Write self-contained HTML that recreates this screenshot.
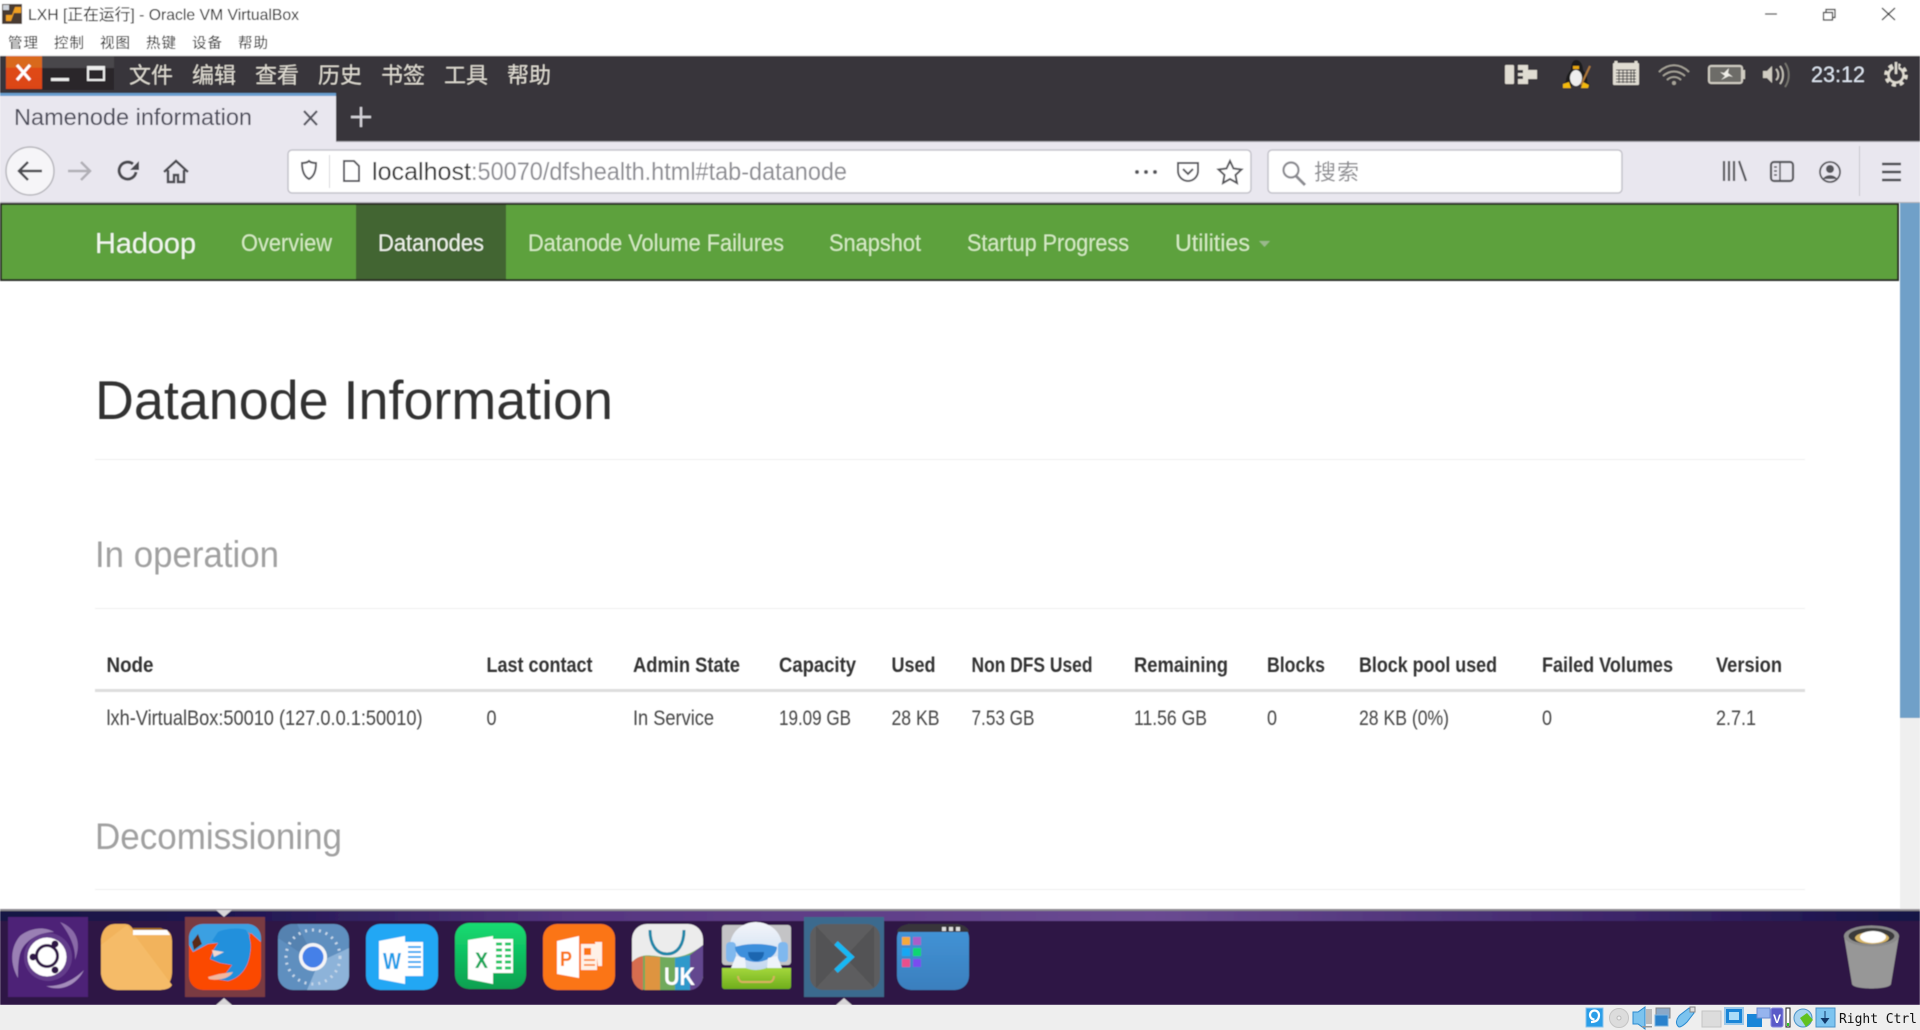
<!DOCTYPE html>
<html lang="zh">
<head>
<meta charset="utf-8">
<title>LXH [正在运行] - Oracle VM VirtualBox</title>
<style>
html,body{margin:0;padding:0;width:1920px;height:1030px;overflow:hidden;background:#fff}
svg{display:block}
text{font-family:"Liberation Sans","Noto Sans CJK SC",sans-serif}
.cjk{font-family:"Noto Sans CJK SC","WenQuanYi Zen Hei",sans-serif}
.th{font-size:21px;font-weight:700;fill:#333}
.td{font-size:21px;fill:#444}
.nav{font-size:24px;fill:#d6ebc4}
.m{font-size:22px;fill:#dfdbd2}
</style>
</head>
<body>
<svg width="1920" height="1030" viewBox="0 0 1920 1030" xmlns="http://www.w3.org/2000/svg">
<defs>
<filter id="b" filterUnits="userSpaceOnUse" x="0" y="0" width="1920" height="1030"><feGaussianBlur stdDeviation=".5"/></filter>
<linearGradient id="strip" x1="0" x2="1" y1="0" y2="0"><stop offset="0" stop-color="#171244"/><stop offset=".12" stop-color="#1f1650"/><stop offset=".3" stop-color="#563580"/><stop offset=".6" stop-color="#6a4a92"/><stop offset=".85" stop-color="#3c2568"/><stop offset="1" stop-color="#141245"/></linearGradient>
<linearGradient id="grnx" x1="0" x2="0" y1="0" y2="1"><stop offset="0" stop-color="#14dc72"/><stop offset="1" stop-color="#0da050"/></linearGradient>
<linearGradient id="filesg" x1="0" x2="0" y1="0" y2="1"><stop offset="0" stop-color="#4395d8"/><stop offset="1" stop-color="#3a7fbe"/></linearGradient>
<linearGradient id="orx" x1="0" x2="0" y1="0" y2="1"><stop offset="0" stop-color="#d9691a"/><stop offset=".35" stop-color="#d9691a"/><stop offset=".36" stop-color="#e04a14"/><stop offset="1" stop-color="#dc4514"/></linearGradient>
<linearGradient id="sg" x1="0" x2="0" y1="0" y2="1"><stop offset="0" stop-color="#a4d63c"/><stop offset="1" stop-color="#6fae1c"/></linearGradient>
<linearGradient id="hd" x1="0" x2="0" y1="0" y2="1"><stop offset="0" stop-color="#f4f6fa"/><stop offset="1" stop-color="#c4d8f0"/></linearGradient>
</defs>

<g filter="url(#b)">
<!-- Window chrome -->
<rect width="1920" height="56" fill="#fff"/>
<rect x="2" y="4" width="20" height="20" fill="#4a3a30"/>
<path d="M6 21h5l3-8h7V7h-6l-3 8H6z" fill="#f0a020"/>
<rect x="3" y="5" width="6" height="5" fill="#cfd4dc"/>
<text x="28" y="20" font-size="16" fill="#111" textLength="271" lengthAdjust="spacingAndGlyphs">LXH [正在运行] - Oracle VM VirtualBox</text>
<g fill="#111">
<text class="cjk" font-size="14.5" x="8" y="48" textLength="30">管理</text>
<text class="cjk" font-size="14.5" x="54" y="48" textLength="30">控制</text>
<text class="cjk" font-size="14.5" x="100" y="48" textLength="30">视图</text>
<text class="cjk" font-size="14.5" x="146" y="48" textLength="30">热键</text>
<text class="cjk" font-size="14.5" x="192" y="48" textLength="30">设备</text>
<text class="cjk" font-size="14.5" x="238" y="48" textLength="30">帮助</text>
</g>
<path d="M1765 14h12" stroke="#222" stroke-width="1.2"/>
<path d="M1823.5 12.5h9v7.500h-9zM1826 12.500v-3h9v8h-2.500" fill="none" stroke="#222" stroke-width="1.2"/>
<path d="M1882 8l13 12M1895 8l-13 12" stroke="#222" stroke-width="1.2"/>

<!-- Ubuntu top panel / tab strip -->
<rect y="55" width="1920" height="1" fill="#eee"/>
<rect y="56" width="1920" height="86" fill="#37363b"/>
<rect x="6" y="56" width="108" height="34" fill="#29282c"/>
<rect x="42" y="56" width="72" height="12" fill="#48474c"/>
<rect x="6" y="56" width="36" height="33" fill="url(#orx)"/>
<path d="M17 65l13 15M30 65l-13 15" stroke="#fff" stroke-width="3"/>
<rect x="51" y="78" width="18" height="3" fill="#eee"/>
<rect x="88" y="67" width="16" height="13" fill="none" stroke="#eee" stroke-width="2"/><rect x="88" y="66" width="16" height="4" fill="#eee"/>
<g>
<text class="cjk m" x="129" y="83" textLength="44">文件</text>
<text class="cjk m" x="192" y="83" textLength="44">编辑</text>
<text class="cjk m" x="255" y="83" textLength="44">查看</text>
<text class="cjk m" x="318" y="83" textLength="44">历史</text>
<text class="cjk m" x="381" y="83" textLength="44">书签</text>
<text class="cjk m" x="444" y="83" textLength="44">工具</text>
<text class="cjk m" x="507" y="83" textLength="44">帮助</text>
</g>

<!-- Tray -->
<rect x="1505" y="65" width="9" height="19" rx="1" fill="#e0dcd2"/>
<path d="M1518 65h10v5h9v9h-9v5h-10v-5h5v-3h-5v-3h5v-3h-5z" fill="#e0dcd2"/>
<path d="M1576 60c5 0 7 6 7 10 3 3 5 8 4 12l3 3c0 2-5 3-8 2l-1-2h-9l-1 2c-3 1-8 0-8-2l3-4c0-4 2-8 5-11 0-4 1-10 5-10z" fill="#1a1a1a"/>
<ellipse cx="1576" cy="78" rx="6" ry="8" fill="#eee"/>
<path d="M1563 84l6-2 2 6h-8zM1583 82l6 3-1 3h-7z" fill="#f3b90f"/>
<path d="M1581 85l9-19" stroke="#b07a3a" stroke-width="2"/>
<rect x="1573" y="66" width="6" height="3" fill="#e9a80f"/>
<rect x="1613" y="63" width="26" height="22" rx="1" fill="#e0dcd2"/>
<path d="M1616 61v6M1636 61v6" stroke="#e0dcd2" stroke-width="3"/>
<path d="M1616 70h20M1616 73h20M1616 76h20M1616 79h20M1616 82h20M1619 70v13M1623 70v13M1627 70v13M1631 70v13M1634 70v13" stroke="#37363b" stroke-width="1"/>
<g fill="none" stroke="#a8a49a" stroke-width="1.800"><path d="M1659 72c9-9 21-9 30 0"/><path d="M1663 76c7-6 15-6 22 0"/><path d="M1667 80c4-4 10-4 14 0"/></g>
<circle cx="1674" cy="83" r="2" fill="#a8a49a"/>
<rect x="1709" y="66" width="33" height="17" rx="2" fill="#6d6c67" stroke="#d0ccc2" stroke-width="2"/>
<rect x="1743" y="70" width="2" height="9" fill="#d0ccc2"/>
<path d="M1729 68l-5 5-4-1 5 4-4 4 8-4 4 1-5-4z" fill="#f0eee8"/>
<path d="M1763 71h4l5-5v17l-5-5h-4z" fill="#d0ccc2"/>
<g fill="none" stroke="#c8c4ba" stroke-width="1.800"><path d="M1776 69c3 3 3 9 0 11"/><path d="M1780 66c4 5 4 13 0 18"/></g>
<path d="M1785 63c5 7 5 17 0 24" fill="none" stroke="#77766f" stroke-width="1.800"/>
<text x="1811" y="82" font-size="22" fill="#dfe6f2" textLength="54" lengthAdjust="spacingAndGlyphs">23:12</text>
<g fill="none" stroke="#e0dcd2"><circle cx="1896" cy="75" r="10" stroke-width="3.500" stroke-dasharray="4 3.850"/><circle cx="1896" cy="75" r="7.500" stroke-width="2.200"/><path d="M1896 62v12" stroke="#37363b" stroke-width="5"/><path d="M1896 62v12" stroke-width="2.500"/></g>

<!-- Tab -->
<rect x="0" y="93" width="336" height="50" fill="#e9e7ef"/>
<rect x="0" y="93" width="336" height="3" fill="#6a9fd0"/>
<text x="14" y="125" font-size="23" fill="#4a4a58" textLength="238" lengthAdjust="spacingAndGlyphs">Namenode information</text>
<path d="M304 111l13 14M317 111l-13 14" stroke="#55555f" stroke-width="2.200"/>
<path d="M361 107v20M351 117h20" stroke="#d6d4da" stroke-width="2.400"/>

<!-- Toolbar -->
<rect y="141" width="1920" height="62" fill="#e9e7ef"/>
<rect x="336" y="141" width="1584" height="1" fill="#9a99a0"/>
<circle cx="30" cy="171" r="24" fill="#f6f5f8" stroke="#b8b7bd" stroke-width="1.500"/>
<path d="M42 171H19M28 162l-9 9 9 9" fill="none" stroke="#4a4a4f" stroke-width="2.500"/>
<path d="M90 171H68M81 162l9 9-9 9" fill="none" stroke="#b0afb5" stroke-width="2.500"/>
<path d="M136 172a8.500 8.500 0 1 1-3-8" fill="none" stroke="#4a4a4f" stroke-width="3"/><path d="M139 161v9h-9z" fill="#4a4a4f"/>
<path d="M164 172l12-11 12 11M168 170v12h6v-7h4v7h6v-12" fill="none" stroke="#4a4a4f" stroke-width="2.500"/>
<rect x="288" y="150" width="963" height="43" rx="4" fill="#fff" stroke="#c4c3cb" stroke-width="1.500"/>
<rect x="1268" y="150" width="354" height="43" rx="4" fill="#fff" stroke="#c4c3cb" stroke-width="1.500"/>
<path d="M302 163c4 0 6-1 7-2 1 1 3 2 7 2 0 6-1 13-7 16-6-3-7-10-7-16z" fill="none" stroke="#55555a" stroke-width="2"/>
<rect x="329" y="155" width="1" height="33" fill="#d8d7dc"/>
<path d="M344 161h10l5 5v15h-15z" fill="none" stroke="#55555a" stroke-width="2"/>
<text x="372" y="180" font-size="25" fill="#333" textLength="99" lengthAdjust="spacingAndGlyphs">localhost</text>
<text x="471" y="180" font-size="25" fill="#8c8c92" textLength="376" lengthAdjust="spacingAndGlyphs">:50070/dfshealth.html#tab-datanode</text>
<g fill="#55555a"><circle cx="1137" cy="172" r="2"/><circle cx="1146" cy="172" r="2"/><circle cx="1155" cy="172" r="2"/></g>
<path d="M1178 163h20v8a10 10 0 0 1-20 0zM1183 169l5 5 5-5" fill="none" stroke="#55555a" stroke-width="2"/>
<path d="M1230 161l3.500 7.500 8 1-6 5.500 1.500 8-7-4-7 4 1.500-8-6-5.500 8-1z" fill="none" stroke="#55555a" stroke-width="2"/>
<circle cx="1291" cy="170" r="7.500" fill="none" stroke="#8a8a90" stroke-width="2.200"/>
<path d="M1296 176l9 9" stroke="#8a8a90" stroke-width="3"/>
<text class="cjk" x="1314" y="180" font-size="22" fill="#8c8c90" textLength="45">搜索</text>
<path d="M1724 161v20M1729 161v20M1734 161v20M1739 161l7 20" fill="none" stroke="#55555a" stroke-width="2.200"/>
<rect x="1771" y="162" width="22" height="19" rx="3" fill="none" stroke="#55555a" stroke-width="2.200"/><path d="M1780 162v19M1774 167h3M1774 171h3M1774 175h3" stroke="#55555a" stroke-width="1.500"/>
<circle cx="1830" cy="172" r="10" fill="none" stroke="#55555a" stroke-width="1.800"/><circle cx="1830" cy="169" r="4" fill="#55555a"/><path d="M1823 179c2-5 12-5 14 0z" fill="#55555a"/>
<rect x="1859" y="146" width="1" height="50" fill="#c8c7cd"/>
<path d="M1882 164h19M1882 172h19M1882 180h19" stroke="#4a4a4f" stroke-width="2.500"/>

<!-- Navbar -->
<rect y="202" width="1920" height="1" fill="#b0afb5"/>
<rect x="1900" y="203" width="20" height="515" fill="#6fa0c8"/>
<rect x="1900" y="718" width="20" height="192" fill="#efefef"/>
<rect x="1" y="204" width="1897" height="76" fill="#5da13c" stroke="#2a2e28" stroke-width="2"/>
<rect x="356" y="205" width="150" height="74" fill="#436533"/>
<text x="95" y="253" font-size="29" fill="#f2f7ee" textLength="101" lengthAdjust="spacingAndGlyphs">Hadoop</text>
<text class="nav" x="241" y="251" textLength="91" lengthAdjust="spacingAndGlyphs">Overview</text>
<text class="nav" x="378" y="251" textLength="106" lengthAdjust="spacingAndGlyphs" style="fill:#eef3ea">Datanodes</text>
<text class="nav" x="528" y="251" textLength="256" lengthAdjust="spacingAndGlyphs">Datanode Volume Failures</text>
<text class="nav" x="829" y="251" textLength="92" lengthAdjust="spacingAndGlyphs">Snapshot</text>
<text class="nav" x="967" y="251" textLength="162" lengthAdjust="spacingAndGlyphs">Startup Progress</text>
<text class="nav" x="1175" y="251" textLength="75" lengthAdjust="spacingAndGlyphs">Utilities</text>
<path d="M1259 241h11l-5.500 6z" fill="#9ab98c"/>

<!-- Content -->
<text x="95" y="419" font-size="55" fill="#333" textLength="518" lengthAdjust="spacingAndGlyphs">Datanode Information</text>
<rect x="95" y="459" width="1710" height="1" fill="#eee"/>
<text x="95" y="567" font-size="37" fill="#a0a0a0" textLength="184" lengthAdjust="spacingAndGlyphs">In operation</text>
<rect x="95" y="608" width="1710" height="1" fill="#eee"/>
<rect x="95" y="689" width="1710" height="3" fill="#ddd"/>
<text x="95" y="849" font-size="37" fill="#a0a0a0" textLength="247" lengthAdjust="spacingAndGlyphs">Decomissioning</text>
<rect x="95" y="889" width="1710" height="1" fill="#eee"/>
<g>
<text class="th" x="106.500" y="672" textLength="47" lengthAdjust="spacingAndGlyphs">Node</text>
<text class="th" x="486.500" y="672" textLength="106" lengthAdjust="spacingAndGlyphs">Last contact</text>
<text class="th" x="633" y="672" textLength="107" lengthAdjust="spacingAndGlyphs">Admin State</text>
<text class="th" x="779" y="672" textLength="77" lengthAdjust="spacingAndGlyphs">Capacity</text>
<text class="th" x="891.500" y="672" textLength="44" lengthAdjust="spacingAndGlyphs">Used</text>
<text class="th" x="971.500" y="672" textLength="121" lengthAdjust="spacingAndGlyphs">Non DFS Used</text>
<text class="th" x="1134" y="672" textLength="94" lengthAdjust="spacingAndGlyphs">Remaining</text>
<text class="th" x="1267" y="672" textLength="58" lengthAdjust="spacingAndGlyphs">Blocks</text>
<text class="th" x="1359" y="672" textLength="138" lengthAdjust="spacingAndGlyphs">Block pool used</text>
<text class="th" x="1542" y="672" textLength="131" lengthAdjust="spacingAndGlyphs">Failed Volumes</text>
<text class="th" x="1716" y="672" textLength="66" lengthAdjust="spacingAndGlyphs">Version</text>
<text class="td" x="106.500" y="725" textLength="316" lengthAdjust="spacingAndGlyphs">lxh-VirtualBox:50010 (127.0.0.1:50010)</text>
<text class="td" x="486.500" y="725" textLength="10" lengthAdjust="spacingAndGlyphs">0</text>
<text class="td" x="633" y="725" textLength="81" lengthAdjust="spacingAndGlyphs">In Service</text>
<text class="td" x="779" y="725" textLength="72" lengthAdjust="spacingAndGlyphs">19.09 GB</text>
<text class="td" x="891.500" y="725" textLength="48" lengthAdjust="spacingAndGlyphs">28 KB</text>
<text class="td" x="971.500" y="725" textLength="63" lengthAdjust="spacingAndGlyphs">7.53 GB</text>
<text class="td" x="1134" y="725" textLength="73" lengthAdjust="spacingAndGlyphs">11.56 GB</text>
<text class="td" x="1267" y="725" textLength="10" lengthAdjust="spacingAndGlyphs">0</text>
<text class="td" x="1359" y="725" textLength="90" lengthAdjust="spacingAndGlyphs">28 KB (0%)</text>
<text class="td" x="1542" y="725" textLength="10" lengthAdjust="spacingAndGlyphs">0</text>
<text class="td" x="1716" y="725" textLength="40" lengthAdjust="spacingAndGlyphs">2.7.1</text>
</g>

<!-- Dock -->
<rect y="909" width="1920" height="96" fill="#2d1244"/>
<rect y="909" width="1920" height="2" fill="#8d8a90"/>
<rect y="911" width="1920" height="10" fill="url(#strip)"/>
<path d="M216 910h16l-8 7z" fill="#d8d6d8"/>
<path d="M216 1005h16l-8-7z" fill="#d8d6d8"/>
<path d="M836 1005h16l-8-7z" fill="#d8d6d8"/>

<!-- Ubuntu -->
<rect x="8" y="917" width="80" height="80" fill="#4e2377"/>
<path d="M60 922c16 6 22 20 15 38 1-14-7-28-15-38z" fill="#8a6aa8"/>
<path d="M84 970c-8 16-24 22-38 16 14 1 28-6 38-16z" fill="#a48cbc"/>
<path d="M18 978c-8-14-8-30 2-42 10-8 24-10 34-4-14 0-30 8-34 22-2 8-2 16-2 24z" fill="#9a80b4"/>
<circle cx="48" cy="957" r="24" fill="#6a4590" fill-opacity=".8"/>
<circle cx="47" cy="957" r="19.500" fill="#fff"/>
<circle cx="47" cy="956" r="10.500" fill="none" stroke="#2d1244" stroke-width="3"/>
<circle cx="55" cy="944" r="3.500" fill="#2d1244"/><circle cx="33" cy="957" r="3.500" fill="#2d1244"/><circle cx="55" cy="970" r="3.500" fill="#2d1244"/>
<!-- Folder -->
<path d="M101 941c0-9 5-17 14-17h10c4 0 6 2 8 5h28c6 0 11 3 11 12v31c0 10-6 18-16 18h-38c-10 0-17-8-17-18z" fill="#f2b35c"/>
<path d="M101 945l26-20 45 60c-2 4-8 5-14 5h-38c-10 0-19-8-19-18z" fill="#f5bb68"/>
<path d="M133 930h34l3 5h-37z" fill="#fff"/><path d="M133 928h28l4 2h-32z" fill="#a96f1c"/>
<!-- Firefox -->
<rect x="185" y="917" width="80" height="80" fill="#7a3a42"/>
<rect x="189" y="924" width="72" height="66" rx="14" fill="#fb4a00"/>
<path d="M189 945v-7c0-8 6-14 14-14h44c8 0 14 6 14 14v4l-10-9-3 7-40 4-15 8z" fill="#3aa0e2"/>
<path d="M218 932c6-3 20-5 28-2 4 7 6 14 4 24-2 14-10 24-22 27l-14-2 12-6 6-8-12-2-10-4 4-10 4-6-6-2z" fill="#2090dc"/>
<path d="M192 942l6-8 4 10-8 6z" fill="#5a2a18"/>
<path d="M248 932c8 6 13 16 13 28l-7 8c2-12 0-26-6-36z" fill="#fb4a00"/>
<path d="M209 979c8 2 20 0 24-7l-14 2-11 3z" fill="#f0b8a0"/>
<path d="M212 950l12 2-10 5z" fill="#f2d8d0"/>
<!-- Chromium -->
<rect x="278" y="924" width="71" height="66" rx="15" fill="#5f8fbf"/>
<path d="M349 948v27c0 9-7 15-15 15h-27l12-28z" fill="#8db3d9"/>
<path d="M278 938c0-8 6-14 15-14h4l20 40z" fill="#5582b0"/>
<circle cx="313" cy="957" r="27" fill="none" stroke="#c5d6e8" stroke-width="3" stroke-dasharray="2 5"/>
<circle cx="313" cy="957" r="14" fill="#f4f4f6"/>
<circle cx="313" cy="957" r="10.500" fill="#4480e8"/>
<!-- Word -->
<rect x="366" y="924" width="72" height="66" rx="14" fill="#22a7f4"/>
<path d="M379 941l26-5v48l-26-5z" fill="#fff"/>
<rect x="405" y="942" width="18" height="34" fill="#fff"/>
<path d="M408 947h13M408 952h13M408 957h13M408 962h13M408 967h13" stroke="#22a7f4" stroke-width="2"/>
<text x="383" y="969" font-size="23" font-weight="700" fill="#1f9de8" textLength="18" lengthAdjust="spacingAndGlyphs">W</text>
<!-- Excel -->
<rect x="455" y="923" width="71" height="66" rx="14" fill="url(#grnx)"/>
<path d="M468 940l25-4v48l-25-5z" fill="#fff"/>
<rect x="493" y="939" width="20" height="34" fill="#fff"/>
<path d="M496 944h6M505 944h6M496 950h6M505 950h6M496 956h6M505 956h6M496 962h6M505 962h6M496 968h6M505 968h6" stroke="#21c868" stroke-width="3"/>
<text x="475" y="968" font-size="22" font-weight="700" fill="#12a858" textLength="13" lengthAdjust="spacingAndGlyphs">X</text>
<!-- PPT -->
<rect x="543" y="924" width="72" height="66" rx="14" fill="#fb7512"/>
<path d="M557 941l22-5v42l-22-4z" fill="#fff"/>
<path d="M581 944h16v26h-16zM595 942h7v24h-4" fill="#fff" fill-opacity=".9"/>
<path d="M584 960h11M584 965h11" stroke="#fb7512" stroke-width="1.500"/><path d="M584 948h7v7h-7z" fill="#fb7512"/>
<text x="560" y="966" font-size="21" font-weight="700" fill="#fb7512" textLength="12" lengthAdjust="spacingAndGlyphs">P</text>
<!-- UK -->
<rect x="632" y="924" width="71" height="66" rx="15" fill="#ececec"/>
<path d="M632 962c8-8 15-7 24-6 14 2 28 4 47-11v30c0 8-7 15-15 15h-41c-8 0-15-7-15-15z" fill="#6faa5c"/>
<path d="M632 962c4-4 7-5 11-6v34h-1c-6-2-10-8-10-15z" fill="#d66d50"/>
<path d="M645 956l15 1v33h-15z" fill="#de9440"/>
<path d="M675 958l15-3v35h-15z" fill="#2e99cb"/>
<path d="M690 955l13-10v30c0 8-6 15-13 15z" fill="#64478f"/>
<path d="M650 930c0 14 6 24 17 24s17-10 17-24" fill="none" stroke="#1f86a8" stroke-width="3"/>
<text x="664" y="985" font-size="25" font-weight="700" fill="#fff" textLength="31" lengthAdjust="spacingAndGlyphs">UK</text>
<!-- Store -->
<rect x="722" y="925" width="69" height="40" rx="3" fill="#c4c4c6"/>
<path d="M722 968h69v18c0 2-1 3-3 3h-63c-2 0-3-1-3-3z" fill="url(#sg)"/>
<ellipse cx="756" cy="946" rx="26" ry="24" fill="url(#hd)"/>
<rect x="726" y="942" width="10" height="20" rx="4" fill="#7fb8ee"/><rect x="778" y="942" width="10" height="20" rx="4" fill="#7fb8ee"/>
<path d="M735 947c12-4 30-4 42 0 0 8-10 15-21 15s-21-7-21-15z" fill="#3c8fdc"/>
<path d="M748 952h16c0 6-4 9-8 9s-8-3-8-9z" fill="#1a66b0"/>
<path d="M745 958l-9-2-5 12h15zM768 958l9-2 5 12h-15z" fill="#eef3fa"/>
<path d="M738 976c0 3 2 6 4 6h28c2 0 4-3 4-6" fill="none" stroke="#d8b060" stroke-width="2"/>
<!-- Terminal-ish launcher -->
<rect x="804" y="917" width="80" height="80" fill="#3a6a8e"/>
<rect x="810" y="924" width="70" height="66" rx="13" fill="#5d5d5f"/>
<path d="M816 926l29 31-29 31zM874 926l-29 31 29 31z" fill="#525254"/>
<path d="M836 943l15 14-15 14" fill="none" stroke="#12b8f4" stroke-width="5"/>
<!-- Files -->
<rect x="897" y="924" width="72" height="66" rx="14" fill="url(#filesg)"/>
<path d="M897 932c0-4 6-8 14-8h44c8 0 14 4 14 8z" fill="#37363b"/>
<rect x="942" y="927" width="4" height="4" fill="#ddd"/><rect x="949" y="927" width="4" height="4" fill="#ddd"/><rect x="956" y="927" width="4" height="4" fill="#ddd"/>
<rect x="902" y="937" width="8" height="8" fill="#f5a93b"/><rect x="913" y="937" width="8" height="8" fill="#aa5dc8"/>
<rect x="902" y="948" width="8" height="8" fill="#12a7f4"/><rect x="913" y="948" width="8" height="8" fill="#0ad672"/>
<rect x="902" y="959" width="8" height="8" fill="#e8508c"/><rect x="913" y="959" width="8" height="8" fill="#7a4cf0"/>
<!-- Trash -->
<path d="M1844 936h55l-8 48c-1 6-38 6-39 0z" fill="#979797"/>
<ellipse cx="1871.500" cy="936" rx="27.500" ry="10.500" fill="#8a8a8a"/>
<ellipse cx="1871.500" cy="936" rx="23" ry="8" fill="#3a3a3a"/>
<ellipse cx="1872" cy="938" rx="17" ry="6" fill="#d9b868"/>
<ellipse cx="1873" cy="937" rx="13" ry="6" fill="#fff"/>
</g>

<!-- Status bar -->
<rect y="1005" width="1920" height="25" fill="#eee"/>
<rect x="1586" y="1008" width="17" height="19" fill="#2a9ee8" stroke="#8ac4ee"/><path d="M1591 1022c6 0 8-3 8-7a4.500 4.500 0 1 0-4.500 4.500" fill="none" stroke="#fff" stroke-width="2.200"/>
<circle cx="1619" cy="1018" r="9.500" fill="#dcdcdc" stroke="#c4c4c4"/><circle cx="1619" cy="1018" r="2" fill="#eee" stroke="#bbb"/>
<path d="M1633 1012h5l7-5v22l-7-5h-5z" fill="#7cc3ee" stroke="#2a8ad0"/><rect x="1646" y="1009" width="6" height="15" fill="#bbb"/><rect x="1642" y="1026" width="10" height="1.500" fill="#999"/>
<rect x="1656" y="1008" width="14" height="10" fill="#8aa8c8" stroke="#888"/><rect x="1655" y="1015" width="13" height="11" fill="#2a82cc" stroke="#7cb4e0"/>
<path d="M1679 1027c-4-3-3-8 1-12l9-7 5 5-7 9c-3 3-6 5-8 5z" fill="#7cc3ee" stroke="#2a8ad0"/><rect x="1690" y="1007" width="5" height="5" fill="#ddd" stroke="#888"/>
<rect x="1702" y="1011" width="19" height="16" fill="#dcdcdc" stroke="#c4c4c4"/>
<rect x="1725" y="1008" width="18" height="16" fill="#1a86d8" stroke="#9ac8ea" stroke-width="2"/><rect x="1729" y="1012" width="10" height="8" fill="#aadcf8"/>
<rect x="1747" y="1014" width="15" height="13" fill="#1a86d8"/><rect x="1757" y="1008" width="13" height="10" fill="#96b4ee" stroke="#6a8ad0"/>
<rect x="1771" y="1008" width="12" height="19" rx="2" fill="#5a5ac8" stroke="#8888e0"/><text x="1773" y="1023" font-size="12" font-weight="700" fill="#fff">V</text>
<rect x="1786" y="1008" width="4" height="19" fill="#fff" stroke="#222"/><rect x="1787" y="1023" width="2" height="3" fill="#2ccc22"/>
<circle cx="1803" cy="1018" r="9" fill="#a8d4f0" stroke="#4a92c8"/><path d="M1800 1018l7-5 6 7-7 7z" fill="#62c220"/>
<rect x="1816" y="1008" width="19" height="19" fill="#7cc4f0" stroke="#4a92c8"/><path d="M1825.500 1011v7h4l-4.500 6-4.500-6h4v-7z" fill="#12396a"/>
<text x="1839" y="1023" font-size="13" fill="#111" textLength="78" style="font-family:'DejaVu Sans Mono','Liberation Mono',monospace">Right Ctrl</text>
</svg>
</body>
</html>
